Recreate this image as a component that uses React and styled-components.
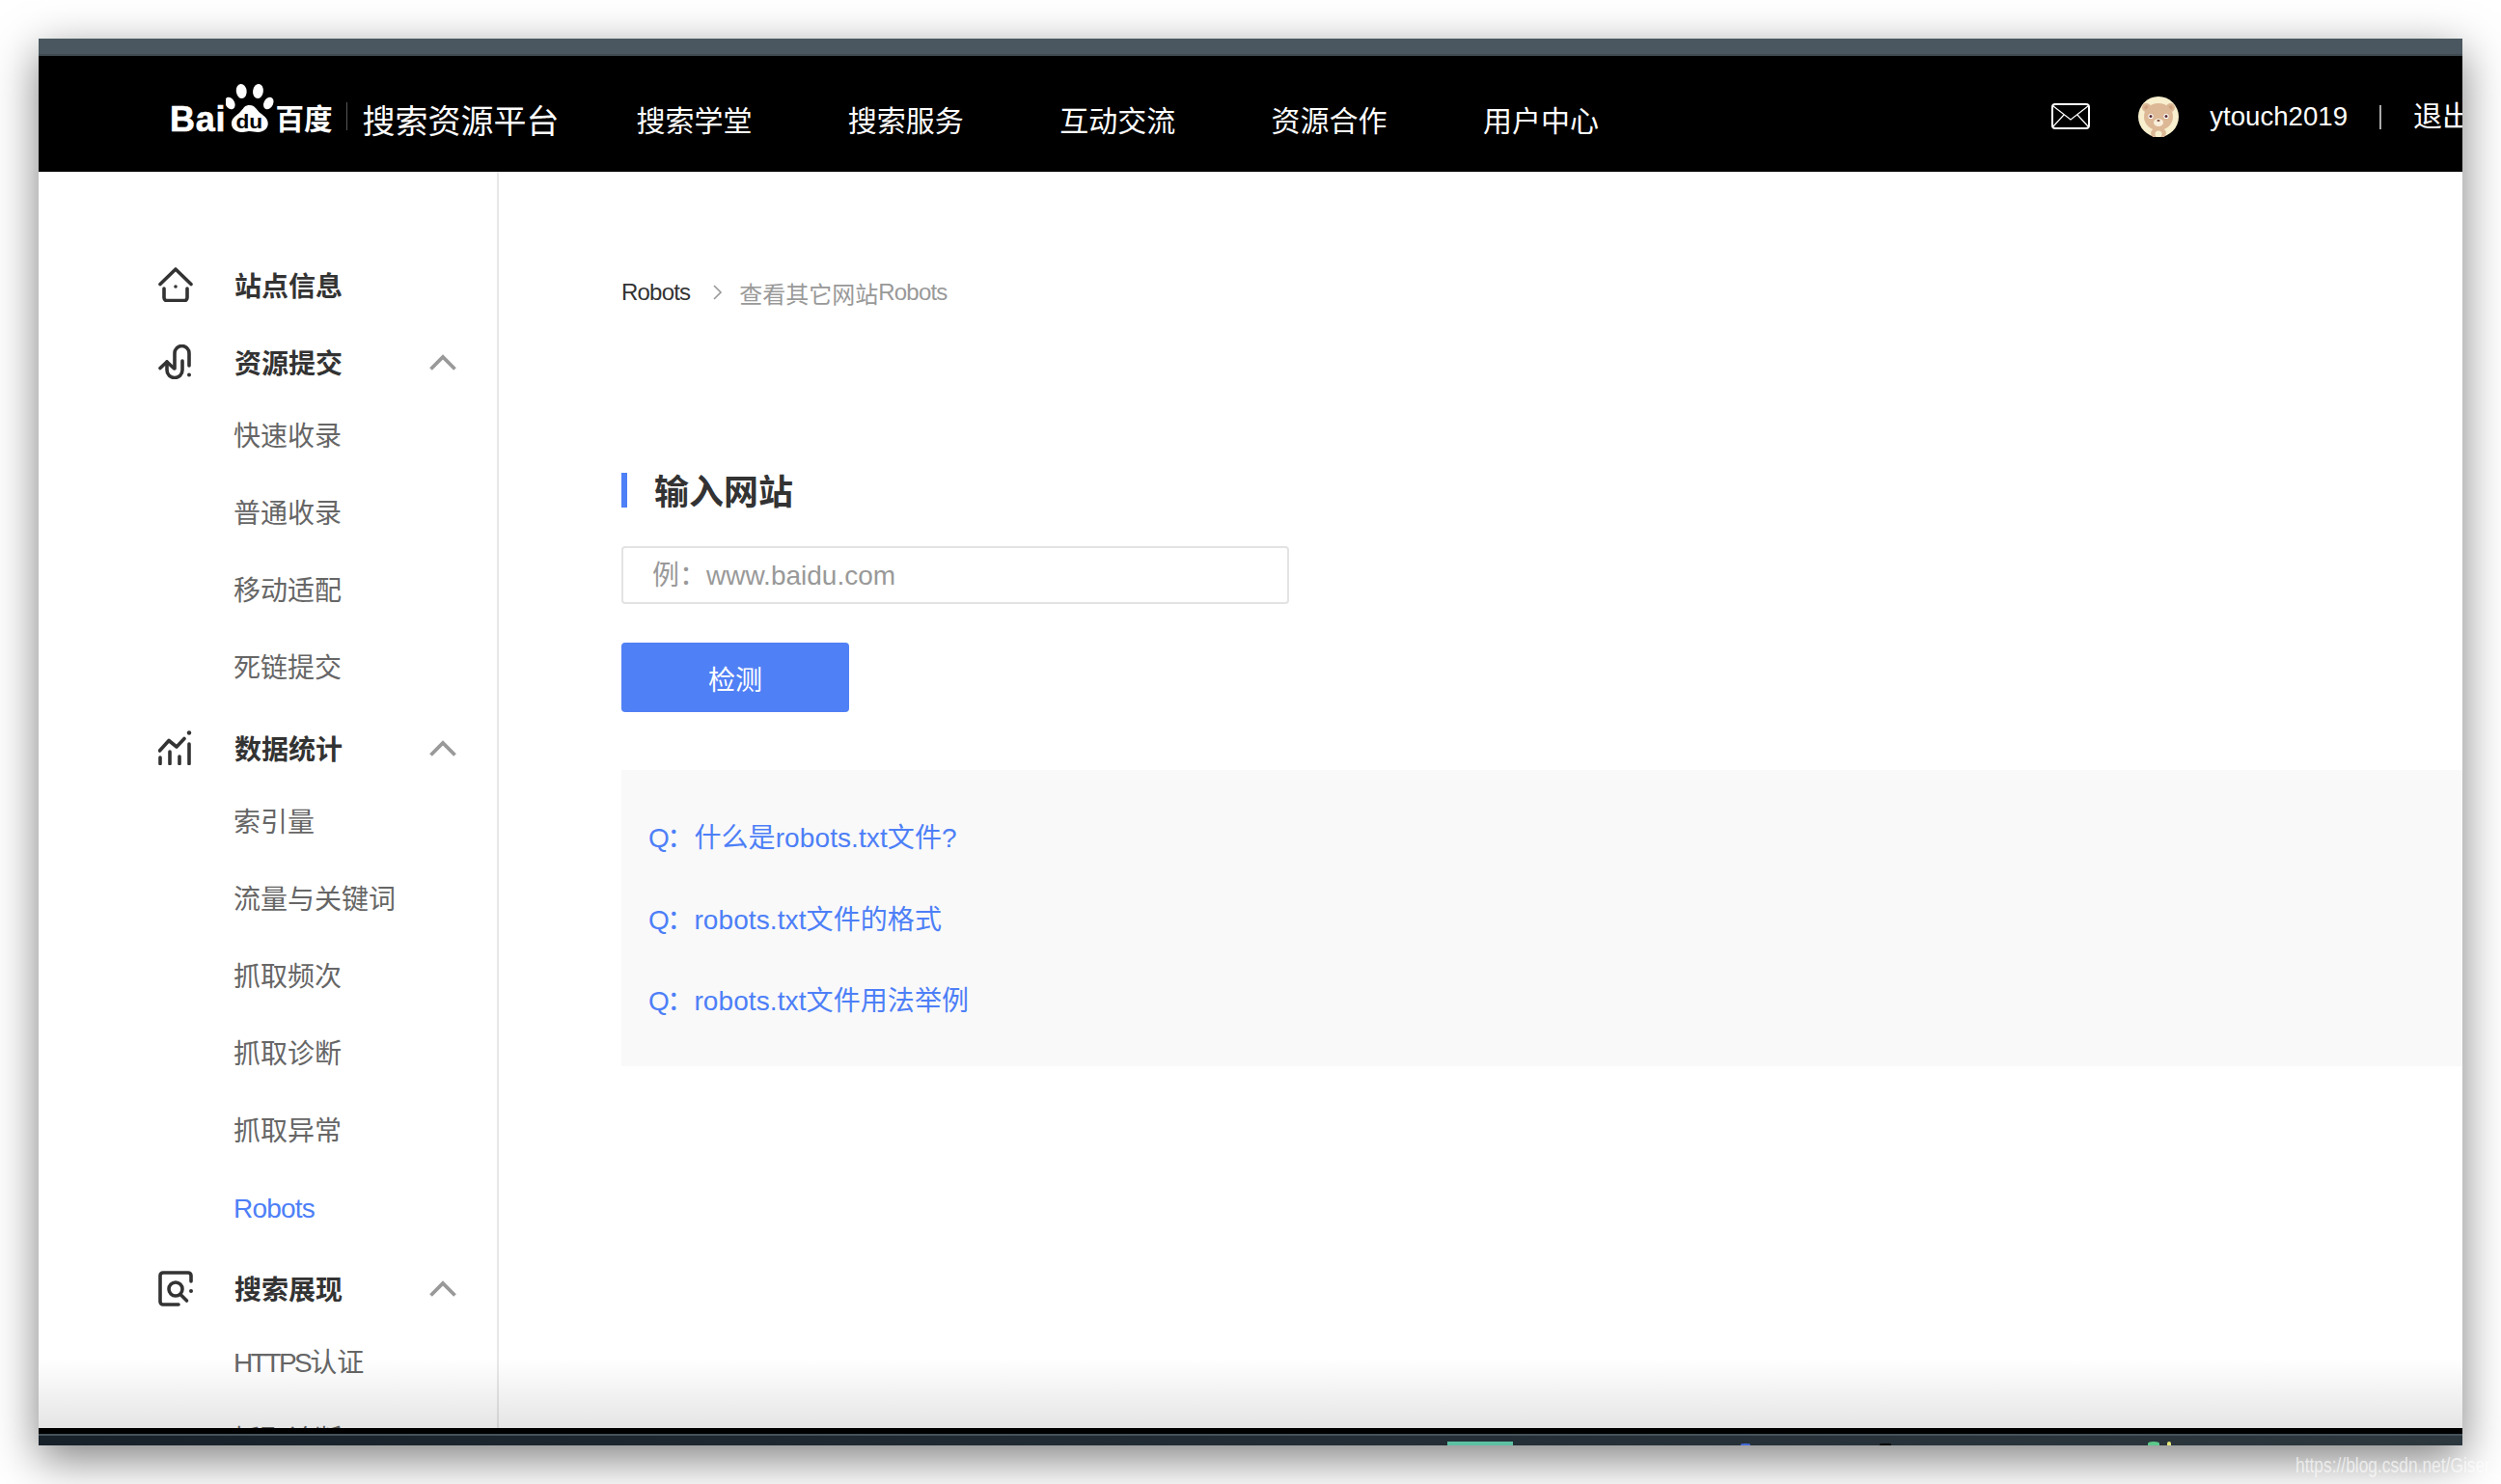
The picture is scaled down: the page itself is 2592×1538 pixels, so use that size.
import React from 'react';
import styled, { createGlobalStyle } from 'styled-components';

const GlobalStyle = createGlobalStyle`
  html, body {
    margin: 0;
    height: 100%;
    background: #fff;
    overflow: hidden;
  }
  body {
    font-family: "Liberation Sans", "Noto Sans CJK SC", sans-serif;
  }
`;

const Page = styled.div`
  position: relative;
  width: 2592px;
  height: 1538px;
  padding: 40px;
  box-sizing: border-box;
  overflow: hidden;
`;

const Frame = styled.div`
  display: flex;
  flex-direction: column;
  height: 1458px;
  overflow: hidden;
  background: #fff;
  box-shadow: 0 14px 44px rgba(0, 0, 0, .5);
`;

const TopStrip = styled.div`
  flex: none;
  height: 16px;
  border-bottom: 2px solid #3e4a50;
  background: #4a5760;
`;

const Header = styled.header`
  flex: none;
  display: flex;
  align-items: center;
  height: 120px;
  padding-left: 136px;
  background: #000;
  color: #fff;
`;

const Logo = styled.div`
  display: flex;
  align-items: flex-end;
  height: 52px;
  margin-top: -12px;
`;

const LogoLatin = styled.span`
  margin-bottom: -3px;
  font-size: 36px;
  line-height: 34px;
  font-weight: 700;
  letter-spacing: .8px;
  -webkit-text-stroke: .6px #fff;
`;

const LogoCjk = styled.span`
  margin: 0 0 -3px -3px;
  font-size: 29.5px;
  line-height: 34px;
  font-weight: 700;
`;

const BrandDivider = styled.span`
  width: 1px;
  height: 29px;
  margin: 4px 15px 0;
  background: #555;
`;

const BrandName = styled.span`
  font-size: 34px;
  line-height: 40px;
  padding-top: 15px;
  width: 204px;
  white-space: nowrap;
`;

const TopNav = styled.nav`
  display: flex;
  gap: 99.4px;
  margin-left: 80px;
  padding-top: 15px;
`;

const TopLink = styled.a`
  font-size: 30px;
  line-height: 40px;
  color: #fff;
  white-space: nowrap;
`;

const UserArea = styled.div`
  display: flex;
  flex: none;
  align-items: center;
  margin-left: auto;
  margin-right: -9px;
  padding-top: 5px;
`;

const UserName = styled.span`
  margin-left: 32px;
  font-size: 27.6px;
  line-height: 40px;
`;

const UserDivider = styled.span`
  width: 2px;
  height: 25px;
  margin: 2px 33px 0;
  background: #aaa;
`;

const Logout = styled.a`
  width: 60px;
  font-size: 30px;
  line-height: 40px;
  white-space: nowrap;
`;

const Avatar = styled.svg`
  flex: none;
  margin-left: 50px;
`;

const Body = styled.div`
  position: relative;
  flex: 1;
  display: flex;
  min-height: 0;
  overflow: hidden;
`;

const Sidebar = styled.aside`
  flex: none;
  width: 475px;
  padding-top: 81px;
  border-right: 2px solid #e8e8e8;
  overflow: hidden;
`;

const GroupRow = styled.div`
  display: flex;
  align-items: center;
  height: 72px;
  margin-bottom: ${(p) => (p.$spaced ? '8px' : 0)};
  padding-left: 124px;
`;

const GroupIcon = styled.svg`
  flex: none;
  margin-right: 43px;
`;

const GroupTitle = styled.span`
  width: 112px;
  font-size: 28px;
  font-weight: 700;
  color: #333;
  white-space: nowrap;
`;

const Caret = styled.svg`
  flex: none;
  margin-left: 90px;
`;

const SubList = styled.ul`
  margin: 0 0 8px;
  padding: 0;
  list-style: none;
`;

const SubItem = styled.li`
  height: 80px;
  padding-left: 202px;
  font-size: 28px;
  line-height: 84px;
  color: ${(p) => (p.$active ? '#4d7ff7' : '#666')};
  white-space: nowrap;
`;

const Latin = styled.span`
  letter-spacing: ${(p) => p.$spacing || '-.8px'};
`;

const Main = styled.main`
  flex: 1;
  min-width: 0;
  padding: 108px 0 0 127px;
`;

const Crumbs = styled.div`
  display: flex;
  align-items: center;
  height: 34px;
  font-size: 24px;
  color: #999;
  white-space: nowrap;
`;

const CrumbHome = styled.span`
  color: #333;
`;

const CrumbArrow = styled.svg`
  flex: none;
  margin: 0 17px 0 23px;
`;

const SectionTitle = styled.h2`
  display: flex;
  align-items: center;
  height: 33px;
  margin: 170px 0 0;
  padding: 0 0 3px 28px;
  border-left: 6px solid #4d7ff7;
  font-size: 36px;
  font-weight: 700;
  color: #333;
`;

const UrlInput = styled.input`
  display: block;
  width: 692px;
  height: 60px;
  margin-top: 40px;
  padding: 2px 30px 0;
  box-sizing: border-box;
  border: 2px solid #e3e3e3;
  border-radius: 4px;
  outline: none;
  font-family: inherit;
  font-size: 28px;
  color: #333;
  &::placeholder {
    color: #999;
    opacity: 1;
  }
`;

const CheckButton = styled.button`
  display: block;
  width: 236px;
  height: 72px;
  margin-top: 40px;
  padding: 2px 0 0;
  border: none;
  border-radius: 4px;
  background: #5080f5;
  font-family: inherit;
  font-size: 28px;
  color: #fff;
`;

const FaqPanel = styled.div`
  margin-top: 60px;
  padding: 28px 0 25px 28px;
  background: #f9f9f9;
`;

const FaqLink = styled.a`
  display: block;
  height: 84.5px;
  font-size: 28px;
  line-height: 86px;
  letter-spacing: .1px;
  color: #4d7ff7;
  white-space: nowrap;
`;

const BottomFade = styled.div`
  position: absolute;
  left: 0;
  right: 0;
  bottom: 0;
  height: 72px;
  background: linear-gradient(rgba(0, 0, 0, 0), rgba(0, 0, 0, .1));
  pointer-events: none;
`;

const DockEdge = styled.div`
  flex: none;
  height: 6px;
  background: #000;
  border-bottom: 2px solid #46525a;
`;

const Dock = styled.div`
  flex: none;
  display: flex;
  align-items: flex-end;
  height: 10px;
  padding-left: 1460px;
  background: linear-gradient(90deg, #17212a, #2c373e);
  overflow: hidden;
`;

const DockBit = styled.span`
  flex: none;
  width: ${(p) => p.$w}px;
  height: ${(p) => p.$h}px;
  margin-left: ${(p) => p.$gap}px;
  background: ${(p) => p.$color};
  border-radius: ${(p) => (p.$round ? '50% 50% 0 0' : 0)};
`;

const Watermark = styled.span`
  position: absolute;
  left: 2379px;
  top: 1506px;
  font-size: 22px;
  line-height: 26px;
  color: rgba(255, 255, 255, .65);
  white-space: nowrap;
  transform: scaleX(.79);
  transform-origin: left center;
`;

const HomeIcon = () => (
  <GroupIcon width="36" height="36" viewBox="0 0 36 36" fill="none" stroke="#333" strokeWidth="3.6" strokeLinecap="round" strokeLinejoin="round">
    <path d="M2 17.5 18 2l16 15.5" />
    <path d="M6 22v9.5a3 3 0 0 0 3 3h18a3 3 0 0 0 3-3V22" />
    <circle cx="18" cy="20" r="1.8" fill="#333" stroke="none" />
  </GroupIcon>
);

const SubmitIcon = () => (
  <GroupIcon width="36" height="36" viewBox="0 0 36 36" fill="none" stroke="#333" strokeWidth="3.6" strokeLinecap="round" strokeLinejoin="round">
    <path d="M2 24.5 9 18l7 6.5" />
    <path d="M9 18v8.5a8 8 0 0 0 16 0V17" />
    <path d="M17 25V9a7.5 7.5 0 0 1 15 0v13" />
    <circle cx="32" cy="31.5" r="2" fill="#333" stroke="none" />
  </GroupIcon>
);

const StatsIcon = () => (
  <GroupIcon width="36" height="36" viewBox="0 0 36 36" fill="none" stroke="#333" strokeWidth="3.6" strokeLinecap="round" strokeLinejoin="round">
    <path d="M1.5 21 11 10.5l8 6.5 8-8.5" />
    <path d="M2 28v6.5M12 22v12.5M22 27v7.5M32 14v20.5" />
    <circle cx="32" cy="2.5" r="2.2" fill="#333" stroke="none" />
  </GroupIcon>
);

const SearchIcon = () => (
  <GroupIcon width="36" height="37" viewBox="0 0 36 37" fill="none" stroke="#333" strokeWidth="3.6" strokeLinecap="round" strokeLinejoin="round">
    <path d="M34 11V5a3 3 0 0 0-3-3H5a3 3 0 0 0-3 3v27a3 3 0 0 0 3 3h16" />
    <circle cx="18" cy="19" r="7" />
    <path d="m23 24.5 6.5 6.5" />
    <circle cx="34" cy="21" r="2" fill="#333" stroke="none" />
  </GroupIcon>
);

const CaretUp = () => (
  <Caret width="28" height="17" viewBox="0 0 28 17" fill="none" stroke="#999" strokeWidth="3.8">
    <path d="M1.5 15.5 14 3l12.5 12.5" />
  </Caret>
);

const BaiduPaw = () => (
  <svg width="54" height="52" viewBox="0 0 50 52" preserveAspectRatio="none">
    <g fill="#fff">
      <ellipse cx="15" cy="8.5" rx="5" ry="7.5" transform="rotate(-6 15 8.5)" />
      <ellipse cx="31" cy="8.5" rx="5" ry="7.5" transform="rotate(6 31 8.5)" />
      <ellipse cx="4" cy="21" rx="4.5" ry="6.5" transform="rotate(-24 4 21)" />
      <ellipse cx="41" cy="21" rx="4.5" ry="6.5" transform="rotate(24 41 21)" />
      <path d="M22.5 23c-5 0-6 5-10 8.500-3.500 3-7 5.500-7 10.500 0 5.500 4.500 9 9.500 9 3.500 0 5-1 8-1s4.500 1 8 1c5 0 9.500-3.500 9.500-9 0-5-3.500-7.500-7-10.500-4-3.500-5.500-8.500-10.500-8.500Z" />
    </g>
    <text x="22.500" y="47" textAnchor="middle" fontFamily="Liberation Sans, sans-serif" fontSize="21" fontWeight="700" fill="#000">du</text>
  </svg>
);

const MailIcon = () => (
  <svg width="40" height="27" viewBox="0 0 40 27" fill="none" stroke="#fff">
    <rect x="1" y="1" width="38" height="25" rx="3" strokeWidth="2" />
    <path d="M2 3l18 14L38 3M2 24l11-12M38 24 27 12" strokeWidth="1.2" />
  </svg>
);

const BearAvatar = () => (
  <Avatar width="42" height="42" viewBox="0 0 42 42">
    <circle cx="21" cy="21" r="21" fill="#f7efcd" />
    <circle cx="8.500" cy="11.500" r="4.500" fill="#ddb896" />
    <circle cx="33.500" cy="11.500" r="4.500" fill="#ddb896" />
    <circle cx="8.500" cy="11.500" r="2.200" fill="#cfa280" />
    <circle cx="33.500" cy="11.500" r="2.200" fill="#cfa280" />
    <ellipse cx="21" cy="38" rx="8" ry="6" fill="#ddb896" />
    <ellipse cx="21" cy="39" rx="3.500" ry="3.500" fill="#f7efcd" />
    <ellipse cx="21" cy="21" rx="15" ry="14" fill="#ddb896" />
    <circle cx="13" cy="20.500" r="2.600" fill="#fff" />
    <circle cx="29" cy="20.500" r="2.600" fill="#fff" />
    <circle cx="13" cy="20.500" r="1.500" fill="#5a2a32" />
    <circle cx="29" cy="20.500" r="1.500" fill="#5a2a32" />
    <ellipse cx="21" cy="27" rx="5" ry="4" fill="#f9efdc" />
    <ellipse cx="21" cy="25" rx="1.600" ry="1.100" fill="#7a4a3c" />
  </Avatar>
);

const CrumbChevron = () => (
  <CrumbArrow width="11" height="16" viewBox="0 0 11 16" fill="none" stroke="#999" strokeWidth="1.6">
    <path d="M2 1l7 7-7 7" />
  </CrumbArrow>
);

const topLinks = ['搜索学堂', '搜索服务', '互动交流', '资源合作', '用户中心'];

const submitItems = ['快速收录', '普通收录', '移动适配', '死链提交'];
const statsItems = ['索引量', '流量与关键词', '抓取频次', '抓取诊断', '抓取异常'];

const faqItems = ['什么是robots.txt文件?', 'robots.txt文件的格式', 'robots.txt文件用法举例'];

const App = () => (
  <Page>
    <GlobalStyle />
    <Frame>
      <TopStrip />
      <Header>
        <Logo>
          <LogoLatin>Bai</LogoLatin>
          <BaiduPaw />
          <LogoCjk>百度</LogoCjk>
        </Logo>
        <BrandDivider />
        <BrandName>搜索资源平台</BrandName>
        <TopNav>
          {topLinks.map((link) => <TopLink key={link}>{link}</TopLink>)}
        </TopNav>
        <UserArea>
          <MailIcon />
          <BearAvatar />
          <UserName>ytouch2019</UserName>
          <UserDivider />
          <Logout>退出</Logout>
        </UserArea>
      </Header>
      <Body>
        <Sidebar>
          <GroupRow $spaced>
            <HomeIcon />
            <GroupTitle>站点信息</GroupTitle>
          </GroupRow>
          <GroupRow>
            <SubmitIcon />
            <GroupTitle>资源提交</GroupTitle>
            <CaretUp />
          </GroupRow>
          <SubList>
            {submitItems.map((item) => <SubItem key={item}>{item}</SubItem>)}
          </SubList>
          <GroupRow>
            <StatsIcon />
            <GroupTitle>数据统计</GroupTitle>
            <CaretUp />
          </GroupRow>
          <SubList>
            {statsItems.map((item) => <SubItem key={item}>{item}</SubItem>)}
            <SubItem $active><Latin>Robots</Latin></SubItem>
          </SubList>
          <GroupRow>
            <SearchIcon />
            <GroupTitle>搜索展现</GroupTitle>
            <CaretUp />
          </GroupRow>
          <SubList>
            <SubItem><Latin $spacing="-2.500px">HTTPS</Latin>认证</SubItem>
            <SubItem>抓取诊断</SubItem>
          </SubList>
        </Sidebar>
        <Main>
          <Crumbs>
            <CrumbHome><Latin>Robots</Latin></CrumbHome>
            <CrumbChevron />
            查看其它网站<Latin>Robots</Latin>
          </Crumbs>
          <SectionTitle>输入网站</SectionTitle>
          <UrlInput placeholder="例：www.baidu.com" />
          <CheckButton>检测</CheckButton>
          <FaqPanel>
            {faqItems.map((item) => <FaqLink key={item}><Latin $spacing="-2.500px">Q</Latin>：{item}</FaqLink>)}
          </FaqPanel>
        </Main>
        <BottomFade />
      </Body>
      <DockEdge />
      <Dock>
        <DockBit $w={68} $h={4} $gap={0} $color="#5cc1a3" />
        <DockBit $w={10} $h={2} $gap={236} $color="#4469d8" $round />
        <DockBit $w={12} $h={2} $gap={134} $color="#000" $round />
        <DockBit $w={12} $h={4} $gap={266} $color="#5cc98a" $round />
        <DockBit $w={4} $h={4} $gap={8} $color="#e6e67a" $round />
      </Dock>
    </Frame>
    <Watermark>https://blog.csdn.net/Giser_D</Watermark>
  </Page>
);

export default App;
